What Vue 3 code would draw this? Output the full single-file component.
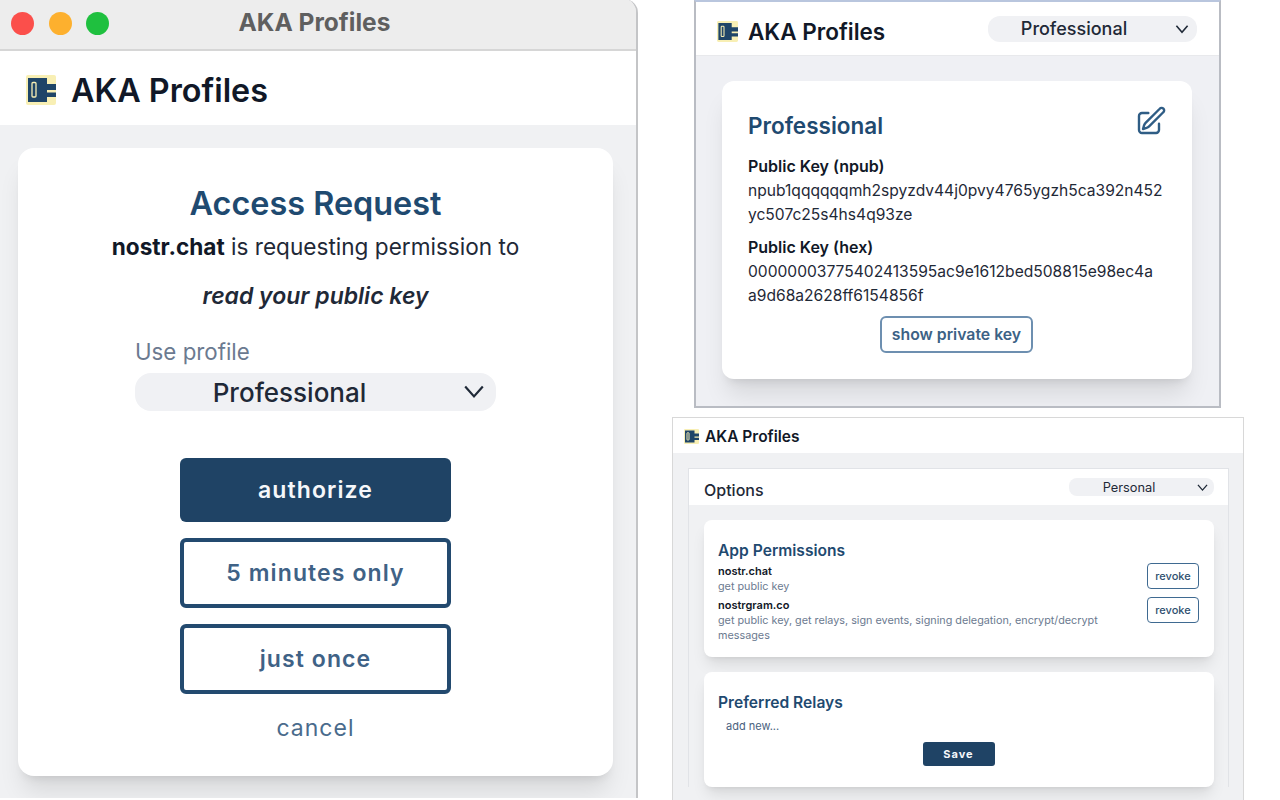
<script setup>
const permissions = [
  { app: 'nostr.chat', scope: 'get public key' },
  { app: 'nostrgram.co', scope: 'get public key, get relays, sign events, signing delegation, encrypt/decrypt messages' },
]
</script>

<template>
  <div class="desk">
    <section class="win win-a">
      <div class="titlebar">
        <span class="dot red"></span><span class="dot amber"></span><span class="dot green"></span>
        <span class="title">AKA Profiles</span>
      </div>
      <header class="head-a">
        <svg class="logo-a" viewBox="0 0 30 30"><rect width="30" height="30" rx="2" fill="#f8efb4"/><path d="M2 3h19v6h9v6H21v2.500h9V22H21v5H2z" fill="#1f4568"/><rect x="6" y="7.500" width="4" height="14.500" rx="1" fill="none" stroke="#f8efb4" stroke-width="1.300"/></svg>
        <span class="brand-a">AKA Profiles</span>
      </header>
      <div class="body-a">
        <div class="card card-a">
          <h1 class="h-access">Access Request</h1>
          <p class="req"><b>nostr.chat</b> is requesting permission to</p>
          <p class="what">read your public key</p>
          <div class="profile">
            <label class="use">Use profile</label>
            <div class="select sel-a">
              <span>Professional</span>
              <svg class="chev" viewBox="0 0 20 20"><path d="M2 5l8 9 8-9" fill="none" stroke="#1f2937" stroke-width="2"/></svg>
            </div>
          </div>
          <button class="act solid">authorize</button>
          <button class="act line">5 minutes only</button>
          <button class="act line">just once</button>
          <span class="cancel">cancel</span>
        </div>
      </div>
    </section>

    <section class="win win-b">
      <header class="head-b">
        <svg class="logo-b" viewBox="0 0 30 30"><rect width="30" height="30" rx="2" fill="#f8efb4"/><path d="M2 3h19v6h9v6H21v2.500h9V22H21v5H2z" fill="#1f4568"/><rect x="6" y="7.500" width="4" height="14.500" rx="1" fill="none" stroke="#f8efb4" stroke-width="1.500"/></svg>
        <span class="brand-b">AKA Profiles</span>
        <div class="select sel-b">
          <span>Professional</span>
          <svg class="chev-b" viewBox="0 0 20 20"><path d="M3 6l7 8 7-8" fill="none" stroke="#1f2937" stroke-width="2"/></svg>
        </div>
      </header>
      <div class="body-b">
        <div class="card card-b">
          <div class="row-b">
            <h2 class="h-prof">Professional</h2>
            <svg class="edit" viewBox="0 0 24 24" fill="none" stroke="#2f5d85" stroke-width="1.800" stroke-linecap="round" stroke-linejoin="round"><path d="M16.860 4.490l1.690-1.690a1.880 1.880 0 1 1 2.650 2.650L10.580 16.070a4.500 4.500 0 0 1-1.900 1.130L6 18l.8-2.680a4.500 4.500 0 0 1 1.130-1.900l8.930-8.930zM18 14v4.750A2.250 2.250 0 0 1 15.750 21H5.250A2.250 2.250 0 0 1 3 18.750V8.250A2.250 2.250 0 0 1 5.250 6H10"/></svg>
          </div>
          <div class="k k1">Public Key (npub)</div>
          <div class="v">npub1qqqqqqmh2spyzdv44j0pvy4765ygzh5ca392n452<br>yc507c25s4hs4q93ze</div>
          <div class="k k2">Public Key (hex)</div>
          <div class="v">00000003775402413595ac9e1612bed508815e98ec4a<br>a9d68a2628ff6154856f</div>
          <button class="show">show private key</button>
        </div>
      </div>
    </section>

    <section class="win win-c">
      <header class="head-c">
        <svg class="logo-c" viewBox="0 0 30 30"><rect width="30" height="30" rx="2" fill="#f8efb4"/><path d="M2 3h19v6h9v6H21v2.500h9V22H21v5H2z" fill="#1f4568"/><rect x="6" y="7.500" width="4" height="14.500" rx="1" fill="none" stroke="#f8efb4" stroke-width="2"/></svg>
        <span class="brand-c">AKA Profiles</span>
      </header>
      <div class="body-c">
        <div class="panel">
          <div class="panel-head">
            <span class="options">Options</span>
            <div class="select sel-c">
              <span>Personal</span>
              <svg class="chev-c" viewBox="0 0 20 20"><path d="M3 6l7 8 7-8" fill="none" stroke="#1f2937" stroke-width="2"/></svg>
            </div>
          </div>
          <div class="panel-body">
            <div class="card card-c perm">
              <h3 class="h-sec">App Permissions</h3>
              <div v-for="p in permissions" :key="p.app" class="perm-row">
                <div class="perm-text">
                  <div class="app">{{ p.app }}</div>
                  <div class="scope">{{ p.scope }}</div>
                </div>
                <button class="revoke">revoke</button>
              </div>
            </div>
            <div class="card card-c relays">
              <h3 class="h-sec">Preferred Relays</h3>
              <div class="addnew">add new...</div>
              <button class="save">Save</button>
            </div>
          </div>
        </div>
      </div>
    </section>
  </div>
</template>

<style>
html, body { margin: 0; background: #fff; }
</style>

<style scoped>
.desk { position: relative; width: 1280px; height: 800px; overflow: hidden; background: #fff; font-family: Inter, "Liberation Sans", sans-serif; color: #111827; }
.win { position: absolute; box-sizing: border-box; display: flex; flex-direction: column; overflow: hidden; }
h1, h2, h3, p { margin: 0; }
button { font-family: inherit; box-sizing: border-box; cursor: pointer; }
.card { background: #fff; box-sizing: border-box; box-shadow: 0 20px 25px -5px rgba(0,0,0,.1), 0 8px 10px -6px rgba(0,0,0,.1); }
.select { background: #f0f1f4; display: flex; align-items: center; box-sizing: border-box; }
.select span { flex: 1; text-align: center; }

/* window A */
.win-a { left: 0; top: -1px; width: 638px; height: 799px; border-right: 2px solid #c4c5c7; border-radius: 0 14px 0 0; background: #f0f1f3; }
.titlebar { height: 52px; flex: none; box-sizing: border-box; background: #ededed; border-bottom: 2px solid #d6d6d6; display: flex; align-items: center; padding: 0 0 2px 11px; gap: 14.500px; position: relative; }
.dot { width: 23px; height: 23px; border-radius: 50%; }
.red { background: #fb4f4b; }
.amber { background: #fdb02e; }
.green { background: #1fc03f; }
.title { position: absolute; left: 0; right: 7px; top: 9px; text-align: center; font-size: 24.500px; line-height: 28px; font-weight: 700; color: #5f5f5f; }
.head-a { height: 74px; flex: none; box-sizing: border-box; padding: 4px 0 0 26px; background: #fff; display: flex; align-items: center; gap: 15px; }
.logo-a { width: 30px; height: 30px; }
.brand-a { font-size: 32.300px; font-weight: 600; color: #111827; }
.body-a { flex: 1; padding: 23px 23px 0 18px; }
.card-a { height: 628px; border-radius: 16px; display: flex; flex-direction: column; align-items: center; }
.h-access { margin-top: 37px; font-size: 32.400px; line-height: 38px; font-weight: 600; color: #1f4a70; }
.req { margin-top: 9px; font-size: 22.600px; line-height: 30px; color: #1f2937; }
.req b { font-weight: 700; color: #111827; }
.what { margin-top: 19px; font-size: 23px; line-height: 30px; font-weight: 600; font-style: italic; color: #1f2937; }
.profile { margin-top: 26px; width: 361px; }
.use { display: block; font-size: 22.300px; line-height: 30px; color: #6b7a90; }
.sel-a { margin-top: 6px; height: 38px; border-radius: 16px; font-size: 26px; font-weight: 500; padding-right: 11px; color: #1f2937; }
.sel-a span { margin-right: 19px; }
.chev { width: 22px; height: 22px; }
.act { width: 271px; border-radius: 6px; font-size: 23px; font-weight: 600; letter-spacing: 1.100px; display: block; }
.solid { margin-top: 47px; height: 64px; background: #1f4365; border: none; color: #f5f7fa; }
.line { margin-top: 15.500px; height: 70.500px; background: #fff; border: 4px solid #234a6f; color: #3f6286; }
.cancel { margin-top: 20px; font-size: 23px; line-height: 28px; letter-spacing: 1px; color: #4a6b8c; }

/* window B */
.win-b { left: 694px; top: 0; width: 527px; height: 408px; border: 2px solid #b9bcc3; border-top-color: #b9c6de; background: #eff0f4; }
.head-b { height: 53px; flex: none; background: #fff; display: flex; align-items: center; padding: 0 22px 0 21px; box-shadow: 0 1px 0 #e8e9ec; }
.logo-b { width: 21px; height: 21px; margin-top: 6px; }
.brand-b { margin: 6px 0 0 10px; font-size: 22.500px; font-weight: 600; }
.sel-b { margin-left: auto; width: 209px; height: 26px; border-radius: 12px; font-size: 18px; font-weight: 500; padding-right: 7px; color: #1f2937; }
.sel-b span { margin-right: 14px; }
.chev-b { width: 16px; height: 16px; }
.body-b { padding: 26px 27px 0 26px; }
.card-b { height: 298px; border-radius: 12px; padding: 28px 28px 0 26px; display: flex; flex-direction: column; }
.row-b { display: flex; justify-content: space-between; align-items: flex-start; height: 37px; }
.h-prof { font-size: 22.500px; line-height: 34px; font-weight: 600; color: #1f4a70; }
.edit { width: 32px; height: 32px; margin: -4px -3px 0 0; }
.k { font-size: 16px; line-height: 24px; font-weight: 600; color: #111827; }
.k1 { margin-top: 8px; }
.k2 { margin-top: 9px; }
.v { margin-top: 1px; font-size: 15.600px; line-height: 23.500px; color: #1f2937; white-space: nowrap; }
.show { align-self: center; margin-top: 9px; width: 153px; height: 37px; border: 2px solid #6d8fb0; border-radius: 6px; background: #fff; font-size: 15.800px; font-weight: 600; color: #3c6285; padding: 0 0 0 1px; }

/* window C */
.win-c { left: 672px; top: 417px; width: 572px; height: 383px; border: 1px solid #d8d8d8; border-bottom: none; background: #f0f1f3; }
.head-c { height: 35px; flex: none; box-sizing: border-box; padding: 2px 0 0 11px; background: #fff; display: flex; align-items: center; }
.logo-c { width: 15px; height: 15px; }
.brand-c { margin-left: 6px; font-size: 15.500px; font-weight: 600; }
.body-c { padding: 15px 14px 0 15px; }
.panel { border: 1px solid #e1e3e7; border-bottom: none; }
.panel-head { height: 36px; background: #fff; display: flex; align-items: flex-start; justify-content: space-between; padding: 0 14px 0 15px; }
.options { margin-top: 11px; font-size: 16px; line-height: 20px; font-weight: 500; color: #1f2937; }
.sel-c { width: 145px; height: 18px; margin-top: 9px; border-radius: 8px; font-size: 12.800px; color: #1f2937; padding-right: 5px; }
.sel-c span { margin-right: 7px; }
.chev-c { width: 13px; height: 13px; }
.panel-body { padding: 15px 14px 0 15px; display: flex; flex-direction: column; gap: 15px; }
.card-c { width: 510px; border-radius: 8px; padding: 0 15px 0 14px; box-shadow: 0 10px 15px -3px rgba(0,0,0,.1), 0 4px 6px -4px rgba(0,0,0,.1); }
.perm { height: 137px; padding-top: 20px; }
.relays { height: 115px; padding-top: 20px; display: flex; flex-direction: column; }
.h-sec { font-size: 15.600px; line-height: 21px; font-weight: 600; color: #1f4a70; }
.perm-row { display: flex; justify-content: space-between; align-items: flex-start; margin-top: 3px; }
.perm-row + .perm-row { margin-top: 0; }
.perm-text { width: 400px; min-height: 34px; }
.app { font-size: 11px; line-height: 15px; font-weight: 600; color: #111827; }
.scope { font-size: 10.800px; line-height: 15px; color: #6b7a90; }
.revoke { margin-top: -1px; width: 52px; height: 26px; border: 1px solid #3f6a91; border-radius: 4px; background: #fff; font-size: 11px; font-weight: 500; color: #2f4f6f; padding: 0; }
.addnew { margin: 5px 0 0 8px; font-size: 11px; line-height: 16px; color: #4a6280; }
.save { align-self: center; margin-top: 8px; width: 72px; height: 24px; border: none; border-radius: 3px; background: #1f4365; color: #f5f7fa; font-size: 11px; font-weight: 700; letter-spacing: 1px; padding: 0; }
</style>
